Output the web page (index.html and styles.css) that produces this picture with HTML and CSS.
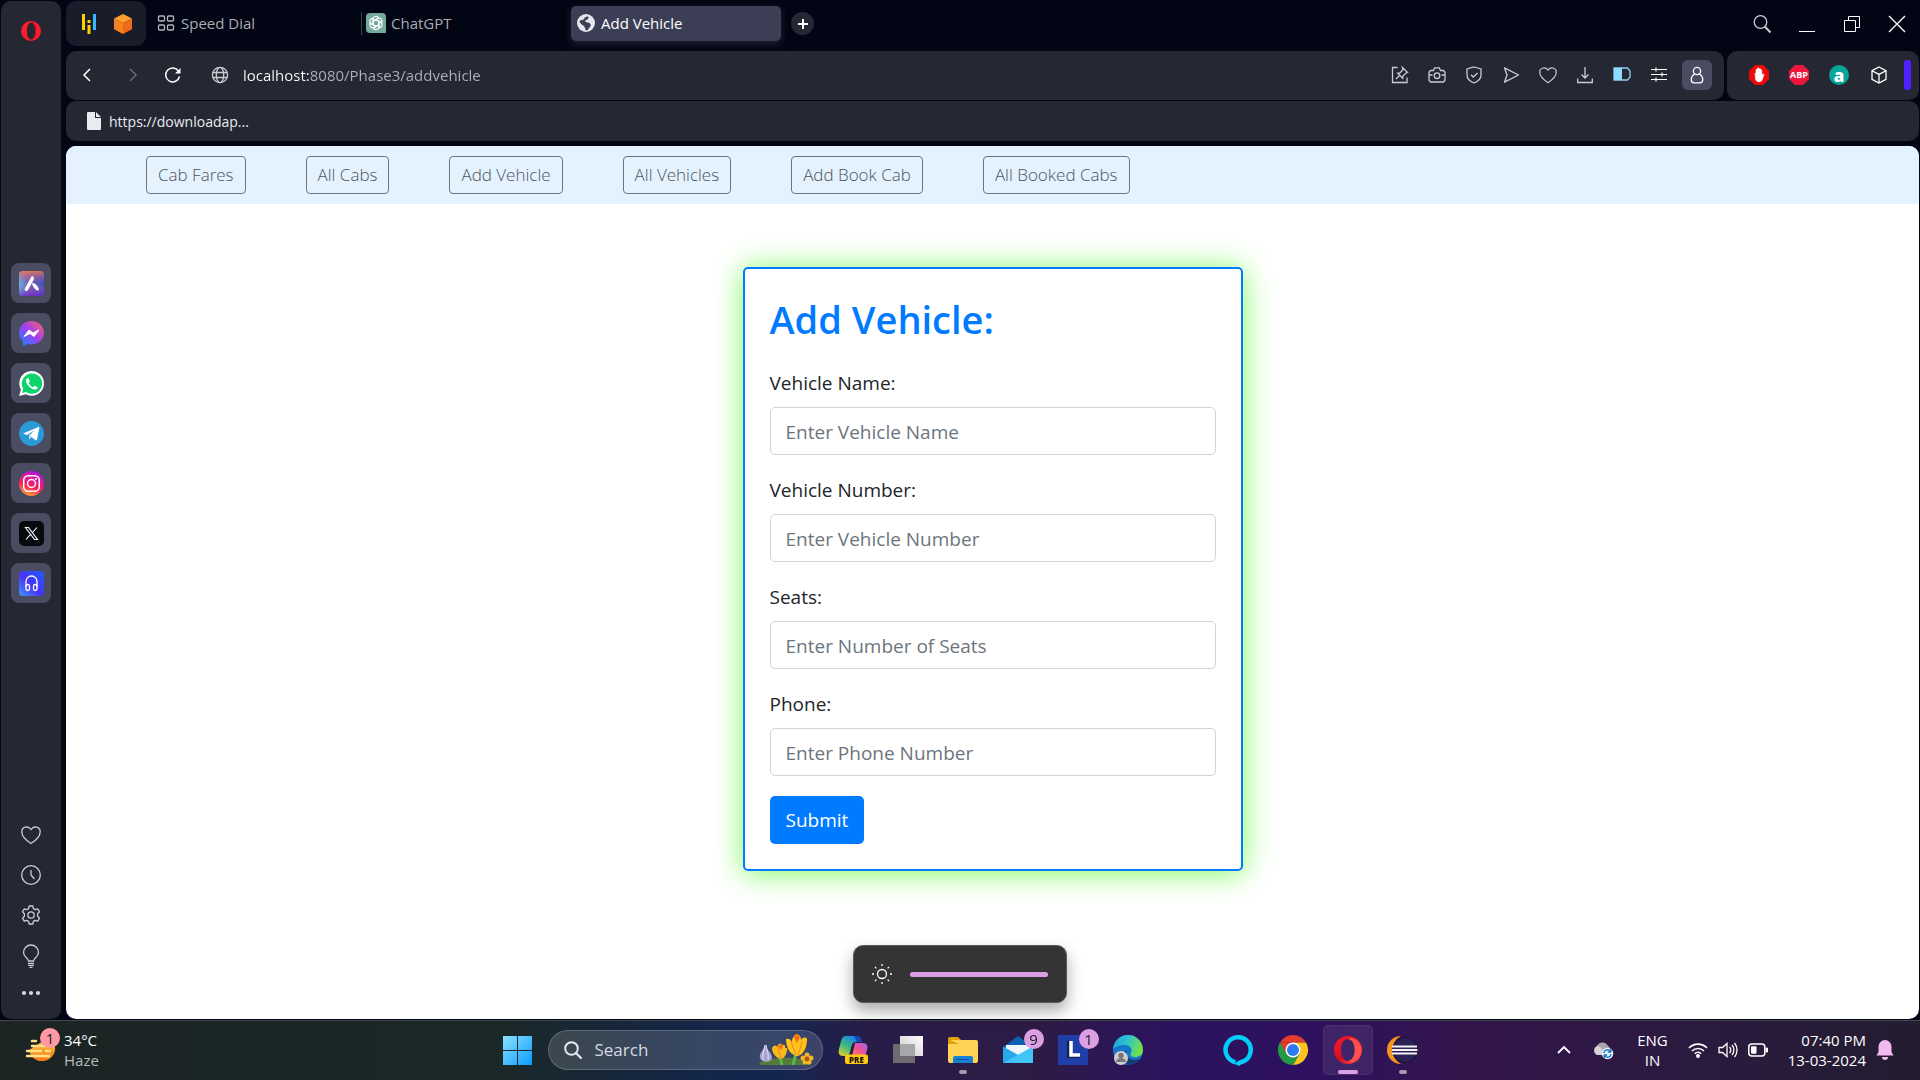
FILE: index.html
```html
<!DOCTYPE html>
<html lang="en">
<head>
<meta charset="utf-8">
<title>Add Vehicle</title>
<link rel="stylesheet" href="styles.css">
</head>
<body>
<div class="browser">
  <aside class="sidebar">
    <button class="bare" aria-label="Opera menu"><svg width="20" height="20" viewBox="0 0 20 20"><path fill="#fe1b2d" fill-rule="evenodd" d="M10 0a10 10 0 1 0 0 20 10 10 0 0 0 0-20zm0 1.600c2.500 0 4.100 3.700 4.100 8.400s-1.600 8.400-4.100 8.400S5.900 14.700 5.900 10 7.500 1.600 10 1.600z"/><path d="M11 1.500c5 1.500 5 15 0 17" fill="none" stroke="#a80d1b" stroke-width="1"/></svg></button>
    <nav class="apps" aria-label="Apps">
      <button class="app" aria-label="Aria"><svg width="25" height="25" viewBox="0 0 25 25"><defs><linearGradient id="aria" x1="0" y1=".6" x2="1" y2=".4"><stop offset="0" stop-color="#59bfe0"/><stop offset=".35" stop-color="#7b63b5"/><stop offset="1" stop-color="#4050b8"/></linearGradient><linearGradient id="ariat" x1="0" y1="0" x2="0" y2="1"><stop offset="0" stop-color="#ff7a45"/><stop offset=".5" stop-color="#a060b0" stop-opacity="0"/><stop offset="1" stop-color="#6a20d0"/></linearGradient></defs><rect width="25" height="25" rx="4" fill="url(#aria)"/><rect width="25" height="25" rx="4" fill="url(#ariat)" opacity=".8"/><path d="M13 5.500c1.500.5 2 2 1 3.500l-5.500 10c-1 1.500-3 .5-2.200-1.300zM13.500 12.500c3 0 5.500 3 6 6.500-2.500.5-5-2.500-6-6.500z" fill="#fff" stroke="#fff"/></svg></button>
      <button class="app" aria-label="Messenger"><svg width="25" height="25" viewBox="0 0 25 25"><defs><linearGradient id="msg" x1="0" y1="1" x2="1" y2="0"><stop offset="0" stop-color="#0a8cff"/><stop offset=".5" stop-color="#a040f0"/><stop offset="1" stop-color="#ff6065"/></linearGradient></defs><path d="M12.500 0C5.500 0 0 5 0 11.800c0 4 1.500 6.500 4 8.500v4.200c3 .5 3-1.500 5-1.600 1.200.3 2.200.5 3.500.5 7 0 12.500-5 12.500-11.600S19.500 0 12.500 0z" fill="url(#msg)"/><path d="M5 15.500l5-6.500 4 3 6-3-5 6.500-4-3z" fill="#fff" stroke="#fff" stroke-linejoin="round"/></svg></button>
      <button class="app" aria-label="WhatsApp"><svg width="25" height="25" viewBox="0 0 25 25"><path d="M.2 25l1.700-6.400A12.400 12.400 0 1 1 6.700 23.300z" fill="#fff"/><path d="M3 22l1.200-4.200A10.200 10.200 0 1 1 7.200 21z" fill="#0bd46b"/><path d="M8.500 7c-1.500.7-2 2.300-1.300 4.200 1.500 3.700 4 6 7.300 7.200 2 .7 4-.4 4.200-2.200l-3-1.500-1.600 1.600c-2-.8-3.300-2-4.400-4.200l1.200-1.500-1.200-3.300z" fill="#fff"/></svg></button>
      <button class="app" aria-label="Telegram"><svg width="25" height="25" viewBox="0 0 25 25"><circle cx="12.500" cy="12.500" r="12.500" fill="#2a9ad6"/><path d="M4 12.500L19.500 6c.6-.2 1 .1.900.8L18 18.500c-.2.8-.9 1-1.500.6L10 14.500l6-5.500-8 5z" fill="#fff"/><path d="M10 14.500v4l2.300-2.300" fill="#c8dcec"/></svg></button>
      <button class="app" aria-label="Instagram"><svg width="25" height="25" viewBox="0 0 25 25"><defs><linearGradient id="ig" x1=".2" y1="1" x2=".6" y2="0"><stop offset="0" stop-color="#ffb92e"/><stop offset=".4" stop-color="#ff1f55"/><stop offset="1" stop-color="#b314e0"/></linearGradient></defs><circle cx="12.500" cy="12.500" r="12.500" fill="url(#ig)"/><g fill="none" stroke="#fff" stroke-width="1.500"><rect x="4.700" y="4.700" width="15.600" height="15.600" rx="4.500"/><circle cx="12.500" cy="12.500" r="4"/></g><circle cx="17" cy="8" r="1" fill="#fff"/></svg></button>
      <button class="app" aria-label="X"><svg width="25" height="25" viewBox="0 0 25 25"><rect width="25" height="25" rx="5" fill="#08090c"/><path d="M6.500 6.500h3l9 12h-3zM18 6.500l-5 5.500M11.800 13.200L7 18.500" fill="none" stroke="#fff" stroke-width="1.100"/></svg></button>
      <button class="app" aria-label="Player"><svg width="25" height="25" viewBox="0 0 25 25"><defs><linearGradient id="pl" x1="0" y1="1" x2="1" y2="0"><stop offset="0" stop-color="#3d9cff"/><stop offset=".45" stop-color="#4b32f5"/><stop offset="1" stop-color="#1f5cff"/></linearGradient></defs><rect width="25" height="25" rx="4" fill="url(#pl)"/><g fill="none" stroke="#fff" stroke-width="1.300"><path d="M7 16v-5.500a5.500 5.500 0 0 1 11 0V16"/><rect x="7" y="13.500" width="3.500" height="6" rx="1.700"/><rect x="14.500" y="13.500" width="3.500" height="6" rx="1.700"/></g></svg></button>
    </nav>
    <div class="side-tools">
      <button class="bare" aria-label="Bookmarks"><svg class="line" width="20" height="20" viewBox="0 0 20 20"><path d="M10 18.500C6 16 .8 11.500.8 6.800.8 2 7 .2 10 4.500 13 .2 19.200 2 19.200 6.800 19.200 11.500 14 16 10 18.500z"/></svg></button>
      <button class="bare" aria-label="History"><svg class="line" width="20" height="20" viewBox="0 0 20 20"><circle cx="10" cy="10" r="9.300"/><path d="M10 5v5l3.500 4"/></svg></button>
      <button class="bare" aria-label="Settings"><svg class="line" width="20" height="20" viewBox="0 0 20 20"><circle cx="10" cy="10" r="3.200"/><path d="M8.200 1h3.600l.6 2.600 1.800 1 2.500-.8 1.800 3.100-1.900 1.900v2.400l1.900 1.900-1.800 3.100-2.500-.8-1.800 1-.6 2.600H8.200l-.6-2.600-1.800-1-2.500.8-1.800-3.100 1.900-1.900V8.800L1.500 6.900l1.800-3.100 2.500.8 1.800-1z" stroke-linejoin="round"/></svg></button>
      <button class="bare" aria-label="Tips"><svg class="line" width="20" height="23" viewBox="0 0 20 23"><path d="M7.500 16c0-3-5-4-5-8.500a7.500 7.500 0 0 1 15 0c0 4.500-5 5.500-5 8.500zM7 18.300h6M7 20.300h6M8.500 22.300h3"/></svg></button>
      <button class="bare" aria-label="More"><svg width="20" height="11" viewBox="0 0 20 11"><g fill="#d5d9de"><circle cx="3" cy="5" r="2.100"/><circle cx="10" cy="5" r="2.100"/><circle cx="17" cy="5" r="2.100"/></g></svg></button>
    </div>
  </aside>

  <div class="main">
    <header class="tabbar">
      <div class="pinned">
        <button class="bare" aria-label="Pinned tab 1"><svg width="20" height="20" viewBox="0 0 20 20"><path d="M4.500 0v16M10 6v3M10 11v9" stroke="#ffd000" stroke-width="3"/><path d="M15.500 0v16" stroke="#38b6ff" stroke-width="3"/></svg></button>
        <button class="bare" aria-label="Pinned tab 2"><svg width="20" height="20" viewBox="0 0 20 20"><path d="M10 0l9 4.500-9 4.700L1 4.500z" fill="#ff9e2c"/><path d="M1 4.500l9 4.700V20l-9-4.700z" fill="#f58220"/><path d="M19 4.500l-9 4.700V20l9-4.700z" fill="#ee6a17"/></svg></button>
      </div>
      <button class="tab"><svg width="18" height="16" viewBox="0 0 18 16" fill="none" stroke="#b4b7bd" stroke-width="1.300"><rect x="1.500" y="1" width="6" height="5" rx="1"/><rect x="10.500" y="1" width="6" height="5" rx="1"/><rect x="1.500" y="10" width="6" height="5" rx="1"/><rect x="10.500" y="10" width="6" height="5" rx="1"/></svg>Speed Dial</button>
      <button class="tab tab-sep"><svg width="20" height="20" viewBox="0 0 20 20"><path d="M4 0h12a4 4 0 0 1 4 4v16H4a4 4 0 0 1-4-4V4a4 4 0 0 1 4-4z" fill="#75a99c"/><g fill="none" stroke="#fff" stroke-width="1.200"><path id="petal" d="M7 11.500V6.200a3 3 0 0 1 5.600-1.300M7.500 8l4.700-2.700"/><use href="#petal" transform="rotate(60 10 10)"/><use href="#petal" transform="rotate(120 10 10)"/><use href="#petal" transform="rotate(180 10 10)"/><use href="#petal" transform="rotate(240 10 10)"/><use href="#petal" transform="rotate(300 10 10)"/></g></svg>ChatGPT</button>
      <button class="tab tab-active"><svg width="18" height="18" viewBox="0 0 18 18"><circle cx="9" cy="9" r="9" fill="#e4e7ec"/><path d="M2.500 7.500C4 5 8 6.500 7.500 3.500L11 2.200c1.500 2-1 4-3 4.500 0 2 3 1.300 4.500 2.300 2 1.500 1.500 3.500 0 4.500-1 .8-1 2.500-3 3l-1-.4c0-2-1-2.300-1.200-3.800C5.500 10.500 3 10 2.500 7.500z" fill="#3b3e55"/><path d="M9.500 6.500l5.500 1" stroke="#e4e7ec" stroke-width="1.500"/></svg>Add Vehicle</button>
      <button class="new-tab" aria-label="New tab"><svg width="10" height="10" viewBox="0 0 10 10"><path d="M5 0v10M0 5h10" stroke="#fff" stroke-width="2"/></svg></button>
      <div class="window-tools">
        <button class="bare" aria-label="Search tabs"><svg class="line" width="20" height="20" viewBox="0 0 20 20"><circle cx="8.500" cy="8" r="6.300"/><path d="M13 12.800l5.500 5.700" stroke-width="2"/></svg></button>
        <button class="bare" aria-label="Minimize"><svg width="20" height="20" viewBox="0 0 20 20"><path d="M2 17.500h16" stroke="#fff"/></svg></button>
        <button class="bare" aria-label="Restore"><svg width="20" height="20" viewBox="0 0 20 20"><path d="M2.500 6.500h11v11h-11zM6.500 6.500v-4h11v11h-4" fill="none" stroke="#fff"/></svg></button>
        <button class="bare" aria-label="Close"><svg width="20" height="20" viewBox="0 0 20 20"><path d="M2 2l16 16M18 2L2 18" stroke="#fff" stroke-width="1.300"/></svg></button>
      </div>
    </header>

    <div class="address-row">
      <div class="address">
        <div class="history-nav">
          <button class="bare" aria-label="Back"><svg width="16" height="16" viewBox="0 0 16 16"><path d="M11 2L5 8l6 6" fill="none" stroke="#fff" stroke-width="1.500"/></svg></button>
          <button class="bare" aria-label="Forward"><svg width="16" height="16" viewBox="0 0 16 16"><path d="M5 2l6 6-6 6" fill="none" stroke="#6b6e78" stroke-width="1.400"/></svg></button>
          <button class="bare reload" aria-label="Reload"><svg width="16" height="16" viewBox="0 0 16 16"><path d="M14.500 9.500A7 7 0 1 1 13.500 4" fill="none" stroke="#fff" stroke-width="1.500"/><path d="M15.500 1v5.500H10z" fill="#fff"/></svg></button>
          <svg class="line" width="18" height="18" viewBox="0 0 18 18"><circle cx="9" cy="9" r="7.600"/><ellipse cx="9" cy="9" rx="3.700" ry="7.600"/><path d="M1.800 6.500h14.400M1.800 11.500h14.400"/></svg>
        </div>
        <input class="url" type="text" aria-label="Address" value="localhost:8080/Phase3/addvehicle">
        <div class="address-tools">
          <button class="bare" aria-label="Edit"><svg class="line" width="18" height="18" viewBox="0 0 18 18"><path d="M6.500 1.500h-5v15H16V11.500M11.500 1.500l5 5-1.500.5-3 3-.3 2.300-5-5L9 7l3-3.500zM8.500 9.500L5 13"/></svg></button>
          <button class="bare" aria-label="Snapshot"><svg class="line" width="18" height="18" viewBox="0 0 18 18"><path d="M2.500 4.500h3l1.200-2.700h4.600l1.200 2.700h3l1.500 1.700v8l-1.500 1.800h-13L1 14.200v-8zM1 9h3.500M13.500 9H17"/><circle cx="9" cy="9.700" r="2.800"/></svg></button>
          <button class="bare" aria-label="Protection"><svg class="line" width="18" height="18" viewBox="0 0 18 18"><path d="M9 1l7 2v6c0 4-3 6.500-7 8-4-1.500-7-4-7-8V3zM6 8.700l2.300 2.300L12.500 7"/></svg></button>
          <button class="bare" aria-label="Send"><svg class="line" width="18" height="18" viewBox="0 0 18 18"><path d="M2.500 1.800L16.500 9l-14 7.200L5 9z" stroke-linejoin="round"/></svg></button>
          <button class="bare" aria-label="Favourite"><svg class="line" width="18" height="18" viewBox="0 0 20 20"><path d="M10 18.500C6 16 .8 11.500.8 6.800.8 2 7 .2 10 4.500 13 .2 19.200 2 19.200 6.800 19.200 11.500 14 16 10 18.500z"/></svg></button>
          <button class="bare" aria-label="Downloads"><svg class="line" width="18" height="18" viewBox="0 0 18 18"><path d="M9 1v11M5.500 8.500L9 12l3.500-3.500M1.700 12.500v4h14.600v-4"/></svg></button>
          <button class="bare" aria-label="Battery saver"><svg width="18" height="18" viewBox="0 0 18 18"><path d="M1 2h13.500L17 5v6l-2.500 3H1z" fill="none" stroke="#8ecff0" stroke-width="1.300"/><path d="M1 2h8v12H1z" fill="#8edcff"/></svg></button>
          <button class="bare" aria-label="Easy setup"><svg width="18" height="18" viewBox="0 0 18 18"><path d="M1 3.500h16M1 8.500h16M1 13.500h16M6 1.500v4M12 6.500v4M6 11.500v4" stroke="#fff" stroke-width="1.200"/></svg></button>
          <button class="profile" aria-label="Profile"><svg class="line bright" width="18" height="18" viewBox="0 0 18 18"><circle cx="9" cy="5" r="3.600"/><path d="M6.500 8c-4.500 3-4 8.800-.5 8.800h6c3.500 0 4-5.800-.5-8.800"/></svg></button>
        </div>
      </div>
      <div class="extensions">
        <button class="bare" aria-label="AdBlock"><svg width="20" height="20" viewBox="0 0 20 20"><path d="M6 0h8l6 6v8l-6 6H6l-6-6V6z" fill="#ee0a0a"/><path d="M6 8l1 2V4.500h1.500V3H10v1l1.500-.2V5h1.300v5l1.500-1 .7.7-2 5.500c-1.500 2.500-5.500 2.200-6.500-1z" fill="#fff" stroke="#fff" stroke-width=".6"/></svg></button>
        <button class="bare" aria-label="Adblock Plus"><svg width="20" height="20" viewBox="0 0 20 20"><path d="M6 0h8l6 6v8l-6 6H6l-6-6V6z" fill="#f0163e"/><text x="10" y="13" text-anchor="middle" font-family="Open Sans, sans-serif" font-weight="700" font-size="9" fill="#fff">ABP</text></svg></button>
        <button class="bare letter-a" aria-label="Amazon Assistant">a</button>
        <button class="bare" aria-label="Extensions"><svg class="line bright" width="20" height="20" viewBox="0 0 20 20"><path d="M10 2l7 3.700v8.600L10 18l-7-3.700V5.700zM3 5.700l7 3.700 7-3.700M10 9.400V18"/></svg></button>
        <span class="ext-handle"></span>
      </div>
    </div>

    <div class="bookmarks">
      <a class="bookmark" href="#"><svg width="14" height="18" viewBox="0 0 14 18"><path d="M1 0h7v6h6v11a1 1 0 0 1-1 1H1a1 1 0 0 1-1-1V1a1 1 0 0 1 1-1zM9 0l5 5H9z" fill="#e8ebf0"/></svg>https://downloadap...</a>
    </div>

    <div class="page">
      <nav class="site-nav">
        <a href="#">Cab Fares</a>
        <a href="#">All Cabs</a>
        <a href="#">Add Vehicle</a>
        <a href="#">All Vehicles</a>
        <a href="#">Add Book Cab</a>
        <a href="#">All Booked Cabs</a>
      </nav>
      <form class="card">
        <h1>Add Vehicle:</h1>
        <div class="field"><label for="vname">Vehicle Name:</label><input id="vname" type="text" placeholder="Enter Vehicle Name"></div>
        <div class="field"><label for="vnumber">Vehicle Number:</label><input id="vnumber" type="text" placeholder="Enter Vehicle Number"></div>
        <div class="field"><label for="seats">Seats:</label><input id="seats" type="text" placeholder="Enter Number of Seats"></div>
        <div class="field"><label for="phone">Phone:</label><input id="phone" type="text" placeholder="Enter Phone Number"></div>
        <button class="submit" type="button">Submit</button>
      </form>
    </div>
  </div>
</div>

<div class="brightness">
  <svg width="20" height="20" viewBox="0 0 20 20"><circle cx="10" cy="10" r="4.500" fill="none" stroke="#fff" stroke-width="1.300"/><path d="M10 0v2M10 18v2M0 10h2M18 10h2M3 3l1.400 1.400M15.600 15.600L17 17M3 17l1.400-1.400M15.600 4.400L17 3" stroke="#fff" stroke-width="1.300"/></svg>
  <input type="range" min="0" max="100" value="100" aria-label="Brightness">
</div>

<footer class="taskbar">
  <button class="weather">
    <span class="weather-icon"><svg width="30" height="30" viewBox="0 0 30 30"><defs><linearGradient id="sun" x1="0" y1="0" x2="0" y2="1"><stop offset="0" stop-color="#ffc83d"/><stop offset="1" stop-color="#f07818"/></linearGradient></defs><path d="M3 15a13 12.500 0 0 0 26-3l-7-8-8 4z" fill="url(#sun)"/><path d="M6 6h4M6 11h20M1 16h14M20 16h4M1 21h22" stroke="#ffe08a" stroke-width="2.500" stroke-linecap="round"/></svg><span class="badge badge-pink">1</span></span>
    <span class="weather-text"><span>34°C</span><span class="dim">Haze</span></span>
  </button>
  <div class="dock">
    <button class="dock-item" aria-label="Start"><svg width="30" height="30" viewBox="0 0 30 30"><defs><linearGradient id="win" x1="0" y1="0" x2="1" y2="1"><stop offset="0" stop-color="#8be2ff"/><stop offset="1" stop-color="#0a9bff"/></linearGradient></defs><path d="M0 1h14v14H0zM15 1h14v14H15zM0 16h14v14H0zM15 16h14v14H15z" fill="url(#win)"/></svg></button>
    <label class="search"><svg width="18" height="18" viewBox="0 0 18 18"><circle cx="7.500" cy="7.500" r="6.300" fill="none" stroke="#e6e9f0" stroke-width="2"/><path d="M12 12l5 5" stroke="#e6e9f0" stroke-width="2.200" stroke-linecap="round"/></svg><input type="text" placeholder="Search" aria-label="Search">
      <svg width="56" height="34" viewBox="0 0 56 34"><path d="M1 30c6-4 15-4 22-5 10-1 20 0 31 5l-2 2H3z" fill="#567a3c"/><path d="M7 11c0 6-6 8-5 14 2 5 11 5 12 0 0-6-6-8-7-14z" fill="#a7a3cf"/><path d="M7 12c-1 6-3 9-2 15M8 12c1 6 3 9 2 15" stroke="#e5e3f6" fill="none"/><path d="M22 24l2 8M38 20l-3 12" stroke="#57b845" stroke-width="3"/><path d="M14 15c2-3 4-3 5-1 1-3 4-5 5-2 2-1 4 0 3 3 2-1 3 1 2 3-1 5-4 8-6 8-5-1-9-6-9-11z" fill="#f7b91e"/><path d="M28 6c3-1 5 1 6 3 0-4 2-7 5-8 3 1 4 3 4 6 2-3 5-3 6-1 0 8-3 15-9 17-7 0-12-8-12-17z" fill="#ffc21c"/><path d="M33 8c1 5 3 9 5 14M44 8c-1 5-2 9-4 14M20 14l3 12" stroke="#e98a12" fill="none"/><path d="M36 4l3-3 3 3-3 6zM20 13l3-2 2 2-2 4z" fill="#f36a18"/><g fill="#f5b52b"><circle cx="49" cy="22" r="2.500"/><circle cx="53" cy="25" r="2.500"/><circle cx="51" cy="29" r="2.500"/><circle cx="47" cy="29" r="2.500"/><circle cx="45" cy="25" r="2.500"/></g><circle cx="49" cy="26" r="2.400" fill="#a8590c"/></svg>
    </label>
    <button class="dock-item" aria-label="Copilot"><svg width="30" height="30" viewBox="0 0 30 30"><defs><linearGradient id="cp1" x1="0" y1="1" x2=".6" y2="0"><stop offset="0" stop-color="#f7d02c"/><stop offset=".5" stop-color="#3dbb78"/><stop offset="1" stop-color="#1b86ea"/></linearGradient><linearGradient id="cp2" x1="0" y1="1" x2="1" y2="0"><stop offset="0" stop-color="#ff7a55"/><stop offset=".5" stop-color="#ee4f9b"/><stop offset="1" stop-color="#a368f2"/></linearGradient></defs><path d="M8 1h10c3 0 4 2 5 6h-5c-3 0-4 2-5 6l-1 4c-1 3-2 4-5 4H5c-4 0-5-3-4-7l2-8c1-3 2-5 5-5z" fill="url(#cp1)"/><path d="M16 1h3c3 0 4 2 5 6h-5z" fill="#1645b8"/><path d="M17 8h8c4 0 5 3 4 7l-2 6H14z" fill="url(#cp2)"/><rect x="7" y="19.500" width="23" height="9.500" rx="2" fill="#ffc91a"/><text x="18.500" y="27.500" text-anchor="middle" font-family="Open Sans, sans-serif" font-size="8" font-weight="800" fill="#1d1400">PRE</text></svg></button>
    <button class="dock-item" aria-label="Task view"><svg width="30" height="30" viewBox="0 0 30 30"><defs><linearGradient id="tv" x1="0" y1="1" x2="1" y2="0"><stop offset="0" stop-color="#c8c8c8"/><stop offset="1" stop-color="#fff"/></linearGradient></defs><path d="M0 9h22v19H0z" fill="#6d6b70"/><path d="M7 1h23v20H7z" fill="url(#tv)"/><path d="M7 9h15v12H7z" fill="#a7a6a9"/></svg></button>
    <button class="dock-item running" aria-label="File Explorer"><svg width="30" height="30" viewBox="0 0 30 30"><path d="M0 4a2 2 0 0 1 2-2h8l4 4v5H0z" fill="#e0a008"/><path d="M2 5h26a2 2 0 0 1 2 2v19a2 2 0 0 1-2 2H2a2 2 0 0 1-2-2V9h11z" fill="#ffd354"/><path d="M5 28v-5a2 2 0 0 1 2-2h16a2 2 0 0 1 2 2v5z" fill="#1681d5"/><path d="M8 24.500h13" stroke="#0a539b"/></svg></button>
    <button class="dock-item" aria-label="Mail"><svg width="30" height="30" viewBox="0 0 30 30"><path d="M0 12L15 1l15 11v16H0z" fill="#0e5fb4"/><path d="M3 10h24v9l-12 4-12-6z" fill="#eef5fb"/><path d="M0 11.500l16 9L0 28z" fill="#28a8ea"/><path d="M30 11.500L0 28h30z" fill="#41c5f6"/></svg><span class="badge">9</span></button>
    <button class="dock-item" aria-label="Lenovo"><svg width="30" height="30" viewBox="0 0 30 30"><path d="M0 0h30v30H0z" fill="#1f3ea8"/><path d="M9 6v17h13v-4H13V6z" fill="#0d2250"/><path d="M13 6v14h9" fill="none" stroke="#fff" stroke-width="3.500"/></svg><span class="badge">1</span></button>
    <button class="dock-item" aria-label="Edge"><svg width="30" height="30" viewBox="0 0 30 30"><defs><linearGradient id="ed" x1="0" y1="0" x2="1" y2=".3"><stop offset="0" stop-color="#1da1df"/><stop offset=".5" stop-color="#2cc4cf"/><stop offset="1" stop-color="#6fe04d"/></linearGradient></defs><circle cx="15" cy="15" r="15" fill="#1477c9"/><path d="M0 15A15 15 0 0 1 30 15c0 5-4 7-8 7-3 0-6-2-4-4 2-4-1-8-6-8-6 0-11 2-12 5z" fill="url(#ed)"/><path d="M14 15c-3 6 3 12 13 9a15 15 0 0 1-12 6c-6-3-7-11-1-15z" fill="#163b78"/><circle cx="8" cy="23" r="7" fill="#cfcfcf"/><circle cx="8" cy="20.500" r="2.700" fill="#777"/><path d="M3 27a5 4 0 0 1 10 0" fill="#777"/></svg></button>
    <span class="dock-gap"></span>
    <button class="dock-item" aria-label="Alexa"><svg width="30" height="30" viewBox="0 0 30 30"><path d="M12.500 27.200A12.600 12.600 0 1 1 20 26.500c-3 .8-5 1.500-6 3.500" fill="none" stroke="#00cdf8" stroke-width="4.500"/></svg></button>
    <button class="dock-item" aria-label="Chrome"><svg width="30" height="30" viewBox="0 0 30 30"><path d="M2 7.500A15 15 0 0 1 28 7.500H15z" fill="#e33b2e"/><path d="M28 7.500A15 15 0 0 1 15 30l6.500-11.200L15 7.500z" fill="#fcc31e"/><path d="M2 7.500A15 15 0 0 0 15 30l6.500-11.200h-13z" fill="#249a46"/><path d="M2 7.500l6.500 11.300L15 7.500z" fill="#e33b2e"/><path d="M2 7.500l6.500 11.300L11 22l-6 2C-1 18 0 11 2 7.500z" fill="#249a46"/><circle cx="15" cy="15" r="7.500" fill="#fff"/><circle cx="15" cy="15" r="6" fill="#2a7bf0"/></svg></button>
    <button class="dock-item current" aria-label="Opera"><svg width="30" height="30" viewBox="0 0 30 30"><defs><linearGradient id="op" x1="0" y1="0" x2="1" y2="1"><stop offset="0" stop-color="#ff1b2d"/><stop offset=".5" stop-color="#d50f1e"/><stop offset="1" stop-color="#ff5550"/></linearGradient></defs><path fill="url(#op)" fill-rule="evenodd" d="M15 1a14 14 0 1 0 0 28 14 14 0 0 0 0-28zm0 3c4 0 7 4 7 11s-3 11-7 11-7-4-7-11 3-11 7-11z"/><path d="M15 4c3-2 6-1 9 1 6 6 6 14 0 20-3 2-6 3-9 1 9-1 9-21 0-22z" fill="#ff4e4b"/></svg></button>
    <button class="dock-item running" aria-label="Eclipse"><svg width="30" height="30" viewBox="0 0 30 30"><path d="M13 1a14 14 0 0 0 0 28A16 16 0 0 1 13 1z" fill="#f7941e"/><circle cx="17" cy="15" r="12.500" fill="#2c2255" stroke="#17122f"/><path d="M4 11.500h25M4 15h25.500M4 18.500h25" stroke="#f2f2f8" stroke-width="2"/></svg></button>
  </div>
  <div class="tray">
    <button class="bare" aria-label="Hidden icons"><svg width="16" height="16" viewBox="0 0 16 16"><path d="M2 11l6-6 6 6" fill="none" stroke="#fff" stroke-width="1.800"/></svg></button>
    <button class="bare" aria-label="Cloud sync"><svg width="22" height="20" viewBox="0 0 22 20"><path d="M5 15a5 5 0 0 1 0-9 6 6 0 0 1 11 0 5 5 0 0 1 0 9z" fill="#aaa5ae"/><path d="M5 15a5 5 0 0 1 0-9c4 0 6 4 9 9z" fill="#d5d2d8"/><circle cx="15.500" cy="13.500" r="5.800" fill="#e9f3fb"/><path d="M12 13a3.500 3.500 0 0 1 6.500-1.500M19 14a3.500 3.500 0 0 1-6.500 1.500M18.800 9v3h-3M12.200 18v-3h3" fill="none" stroke="#1672c4" stroke-width="1.300"/></svg></button>
    <button class="lang"><span>ENG</span><span>IN</span></button>
    <button class="status" aria-label="Network, volume and battery"><svg width="20" height="16" viewBox="0 0 20 16" fill="none" stroke="#fff" stroke-width="1.600"><path d="M1 6a12.500 12.500 0 0 1 18 0M4 9a8.500 8.500 0 0 1 12 0M6.800 11.700a4.600 4.600 0 0 1 6.400 0"/><circle cx="10" cy="14" r="1.200" fill="#fff"/></svg><svg width="20" height="18" viewBox="0 0 20 18" fill="none" stroke="#fff" stroke-width="1.300"><path d="M1 6.500v5h3.500l4.500 4V2.500l-4.500 4zM11.500 6a4.500 4.500 0 0 1 0 6M14 4a7.500 7.500 0 0 1 0 10M16.500 2a11 11 0 0 1 0 14"/></svg><svg width="20" height="14" viewBox="0 0 20 14"><rect x=".8" y="1" width="16" height="12" rx="3" fill="none" stroke="#fff" stroke-width="1.500"/><path d="M18 5v4h1.500V5z" fill="#fff" stroke="#fff"/><rect x="3" y="3.300" width="5.500" height="7.400" rx="1" fill="#fff"/></svg></button>
    <button class="clock"><span>07:40 PM</span><span>13-03-2024</span></button>
    <button class="bare" aria-label="Notifications"><svg width="18" height="20" viewBox="0 0 18 20"><path d="M9 0a6.500 6.500 0 0 1 6.500 6.500V12l2 3.500H.5l2-3.500V6.500A6.500 6.500 0 0 1 9 0zM6 17h6a3 3 0 0 1-6 0z" fill="#f3b8f0"/></svg></button>
  </div>
</footer>
</body>
</html>
```
FILE: styles.css
```css
* { box-sizing: border-box; }

body {
  margin: 0;
  min-height: 100vh;
  display: flex;
  flex-direction: column;
  background: #020513;
  font-family: "Open Sans", "Noto Sans", sans-serif;
  font-size: 15px;
  color: #fff;
}

svg { display: block; flex: none; overflow: visible; }

button, input { font: inherit; color: inherit; }

button {
  border: 0;
  padding: 0;
  background: none;
  white-space: nowrap;
}

a { text-decoration: none; }

.line { fill: none; stroke: #c9cdd3; stroke-width: 1.3; }
.bright { stroke: #fff; }

/* Browser window */
.browser {
  flex: 1;
  display: flex;
  gap: 5px;
  padding: 1px;
}

.sidebar {
  flex: none;
  width: 60px;
  display: flex;
  flex-direction: column;
  align-items: center;
  justify-content: space-between;
  padding: 20px 0;
  border-radius: 10px;
  background: #252833;
}

.apps { display: grid; gap: 10px; }

.app {
  width: 40px;
  height: 40px;
  display: grid;
  place-items: center;
  border-radius: 8px;
  background: #4a4c62;
}

.side-tools { display: grid; gap: 20px; }

.main {
  flex: 1;
  min-width: 0;
  display: flex;
  flex-direction: column;
}

/* Tabs */
.tabbar {
  height: 50px;
  display: flex;
  align-items: flex-start;
}

.pinned {
  width: 80px;
  height: 45px;
  display: flex;
  align-items: center;
  justify-content: space-evenly;
  margin-right: 5px;
  border-radius: 10px;
  background: #191c29;
}

.tab {
  width: 210px;
  height: 35px;
  display: flex;
  align-items: center;
  gap: 6px;
  margin-top: 5px;
  padding: 0 6px 1px;
  color: #a9acb2;
}

.tab-sep {
  gap: 5px;
  padding-left: 5px;
  background: linear-gradient(#3a3d49, #3a3d49) 0 6px / 1px 23px no-repeat;
}

.tab-active {
  border-radius: 5px;
  background: #3b3e55;
  box-shadow: 0 3px 8px #3b3e5588;
  color: #fff;
}

.new-tab {
  width: 23px;
  height: 23px;
  display: grid;
  place-items: center;
  margin: 11px 0 0 10px;
  border-radius: 50%;
  background: #252833;
}

.window-tools {
  display: flex;
  gap: 25px;
  margin: 13px 12px 0 auto;
}

/* Address bar */
.address-row { display: flex; gap: 3px; }

.address, .extensions, .bookmarks {
  display: flex;
  align-items: center;
  border-radius: 10px;
  background: #252833;
}

.address {
  flex: 1;
  height: 49px;
  padding: 0 12px 1px 13px;
}

.history-nav {
  display: flex;
  align-items: center;
  gap: 30px;
}

.reload { margin-left: -6px; }

.url {
  flex: 1;
  min-width: 0;
  margin-left: 14px;
  padding: 0;
  border: 0;
  outline: 0;
  background: linear-gradient(90deg, #fff 66px, #abb2c0 66px);
  background-clip: text;
  color: transparent;
}

.address-tools {
  display: flex;
  align-items: center;
  gap: 19px;
}

.profile {
  width: 30px;
  height: 30px;
  display: grid;
  place-items: center;
  margin-left: -5px;
  border-radius: 6px;
  background: #4a4c62;
}

.extensions {
  gap: 20px;
  padding: 0 8px 1px 22px;
}

.letter-a {
  width: 20px;
  height: 20px;
  border-radius: 50%;
  background: #05a597;
  font-size: 17px;
  font-weight: 800;
  line-height: 17px;
}

.ext-handle {
  width: 7px;
  height: 30px;
  margin-left: -5px;
  border-radius: 3px;
  background: #4f20ff;
}

.bookmarks {
  height: 40px;
  margin: 1px 0 5px;
  padding: 0 21px;
}

.bookmark {
  display: flex;
  align-items: center;
  gap: 8px;
  color: #e8ebf0;
  font-size: 14px;
}

/* Web page */
.page {
  flex: 1;
  overflow: hidden;
  padding-bottom: 20px;
  border-radius: 10px;
  background: #fff;
  color: #212529;
  font-size: 19px;
}

.site-nav {
  display: flex;
  gap: 60px;
  padding: 10px 80px;
  background: #e3f2fd;
}

.site-nav a {
  padding: 0 11px;
  border: 1px solid #6c757d;
  border-radius: 4px;
  color: #4c555d;
  font-size: 17px;
  font-weight: 300;
  line-height: 36px;
}

.card {
  width: 500px;
  max-width: 100%;
  margin: 63px auto 0;
  padding: 26px 25px 25px;
  border: 2px solid #007bff;
  border-radius: 5px;
  box-shadow: 0 2px 30px #7dfa5c;
}

.card h1 {
  margin: 0 0 25px;
  color: #007bff;
  font-size: 38px;
  font-weight: 600;
  line-height: 48px;
}

.field { margin-bottom: 20px; }

.field label {
  display: block;
  margin-bottom: 9px;
  line-height: 30px;
}

.field input {
  display: block;
  width: 100%;
  height: 48px;
  padding: 2px 15px 0;
  border: 1px solid #ced4da;
  border-radius: 5px;
  background: #fff;
}

.field input::placeholder { color: #6c757d; opacity: 1; }

.submit {
  display: block;
  height: 48px;
  padding: 0 16px;
  border-radius: 5px;
  background: #007bff;
  color: #fff;
}

/* Brightness flyout */
.brightness {
  position: fixed;
  bottom: 77px;
  left: 50%;
  transform: translateX(-50%);
  display: flex;
  align-items: center;
  gap: 18px;
  padding: 18px;
  border: 1px solid #5a5a5a;
  border-radius: 10px;
  background: #343434;
  box-shadow: 0 8px 16px #0005;
}

.brightness input {
  appearance: none;
  width: 138px;
  height: 5px;
  margin: 0;
  border-radius: 3px;
  background: #dd9fe4;
}

.brightness input::-webkit-slider-thumb { appearance: none; width: 0; }

/* Taskbar */
.taskbar {
  height: 60px;
  display: grid;
  grid-template-columns: 1fr auto 1fr;
  align-items: center;
  padding: 0 26px 2px;
  border-top: 1px solid #45474f;
  background: linear-gradient(90deg, #1b2423 0%, #1a2828 26%, #14264a 37%, #142650 41%, #281c48 45%, #2d1b45 54%, #2c125f 61%, #2d1160 68%, #33154c 76%, #2b1a3f 88%, #231d30 100%);
}

.weather {
  justify-self: start;
  display: flex;
  align-items: center;
  gap: 8px;
  text-align: left;
}

.weather-icon, .dock-item { position: relative; }

.weather-text, .lang, .clock {
  display: grid;
  line-height: 20px;
}

.dim { color: #b5bab9; }

.badge {
  position: absolute;
  top: 4px;
  right: -1px;
  width: 20px;
  height: 20px;
  border-radius: 50%;
  background: #dd9fe4;
  color: #1b1b1b;
  font-size: 15px;
  line-height: 20px;
  text-align: center;
}

.badge-pink {
  top: -7px;
  right: -4px;
  background: #ff99a4;
}

.dock {
  display: flex;
  align-items: center;
  gap: 5px;
}

.dock-item {
  width: 50px;
  height: 50px;
  display: grid;
  place-items: center;
  border-radius: 5px;
}

.current { background: #ffffff14; box-shadow: inset 0 0 0 1px #ffffff10; }

.running::after, .current::after {
  content: "";
  position: absolute;
  bottom: 1px;
  left: 21px;
  width: 8px;
  height: 4px;
  border-radius: 2px;
  background: #a49bb0;
}

.current::after {
  left: 15px;
  width: 20px;
  background: #dd9fe4;
}

.dock-gap { width: 50px; }

.search {
  width: 275px;
  height: 40px;
  display: flex;
  align-items: center;
  gap: 13px;
  padding: 0 8px 0 15px;
  border: 1px solid #ffffff30;
  border-radius: 20px;
  background: #ffffff26;
}

.search input {
  flex: 1;
  min-width: 0;
  padding: 0;
  border: 0;
  outline: 0;
  background: none;
  font-size: 17px;
}

.search input::placeholder { color: #d5dae2; opacity: 1; }

.tray {
  justify-self: end;
  display: flex;
  align-items: center;
}

.tray .bare { margin-right: 20px; }

.tray .bare:last-child { margin-right: 0; }

.lang { margin: 0 20px 0 3px; }

.status {
  display: flex;
  align-items: center;
  gap: 10px;
  margin-right: 20px;
}

.clock { margin-right: 10px; text-align: right; }
```
